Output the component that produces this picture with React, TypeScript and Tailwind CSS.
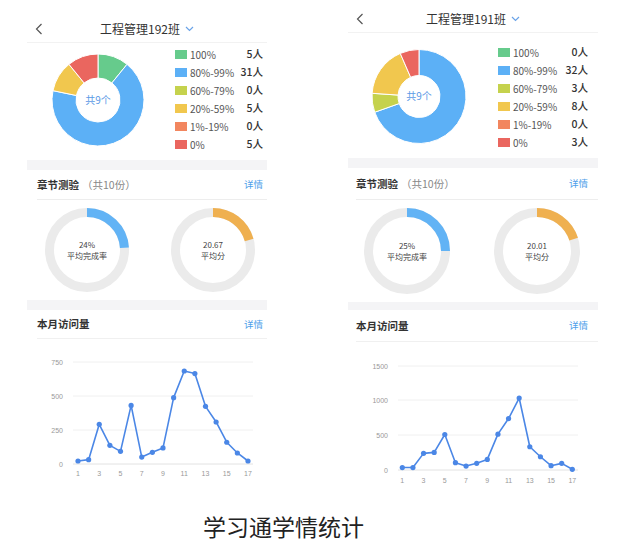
import React from "react";

const FONT = "font-['Noto_Sans_CJK_SC','Noto_Sans',sans-serif]";

const COLORS = {
  green: "#66cb8c",
  blue: "#5cb0f6",
  olive: "#c5d24d",
  yellow: "#f1c74e",
  orange: "#f2865f",
  red: "#ea665f",
};

type Slice = { label: string; value: number; color: string };

type ChartCfg = {
  data: number[];
  max: number;
  labels: string[];
  gridYs: number[];
  zeroY: number;
  topY: number;
  x0: number;
  dx: number;
  gridX1: number;
  gridX2: number;
  labelX: number;
  xLabelY: number;
  height: number;
};

type PanelCfg = {
  title: string;
  wrap: string;
  donutBox: string;
  donutW: number;
  donutH: number;
  donutCx: number;
  donutCy: number;
  rOuter: number;
  rInner: number;
  legend: string;
  slices: Slice[];
  quizHead: string;
  rings: string;
  ringR: number;
  rate: string;
  score: string;
  scorePct: number;
  band2: string;
  visitHead: string;
  chart: ChartCfg;
  width: number;
};

function polar(cx: number, cy: number, r: number, deg: number) {
  const a = ((deg - 90) * Math.PI) / 180;
  return [cx + r * Math.cos(a), cy + r * Math.sin(a)];
}

function sectorPath(cx: number, cy: number, r0: number, r1: number, a0: number, a1: number) {
  const large = a1 - a0 > 180 ? 1 : 0;
  const [x1, y1] = polar(cx, cy, r1, a0);
  const [x2, y2] = polar(cx, cy, r1, a1);
  const [x3, y3] = polar(cx, cy, r0, a1);
  const [x4, y4] = polar(cx, cy, r0, a0);
  return `M${x1} ${y1} A${r1} ${r1} 0 ${large} 1 ${x2} ${y2} L${x3} ${y3} A${r0} ${r0} 0 ${large} 0 ${x4} ${y4} Z`;
}

function Donut({ cfg }: { cfg: PanelCfg }) {
  const total = cfg.slices.reduce((s, x) => s + x.value, 0);
  let acc = 0;
  return (
    <svg width={cfg.donutW} height={cfg.donutH} className="shrink-0">
      {cfg.slices.map((s) => {
        if (s.value === 0) return null;
        const a0 = (acc / total) * 360;
        acc += s.value;
        const a1 = (acc / total) * 360;
        return (
          <path
            key={s.label}
            d={sectorPath(cfg.donutCx, cfg.donutCy, cfg.rInner, cfg.rOuter, a0, a1)}
            fill={s.color}
            stroke="#ffffff"
            strokeWidth={1}
          />
        );
      })}
      <text
        x={cfg.donutCx}
        y={cfg.donutCy + 3.5}
        textAnchor="middle"
        fontSize="10"
        fill="#5b9ae6"
        fontFamily="Noto Sans CJK SC, sans-serif"
      >
        共9个
      </text>
    </svg>
  );
}

function Ring({ r, pct, color, top, bottom }: { r: number; pct: number; color: string; top: string; bottom: string }) {
  const sw = 9;
  const rr = r - sw / 2;
  const c = 2 * Math.PI * rr;
  const size = r * 2;
  return (
    <div className="relative shrink-0" style={{ width: size, height: size }}>
      <svg width={size} height={size}>
        <circle cx={r} cy={r} r={rr} fill="none" stroke="#ebebeb" strokeWidth={sw} />
        <circle
          cx={r}
          cy={r}
          r={rr}
          fill="none"
          stroke={color}
          strokeWidth={sw}
          strokeDasharray={`${c * pct} ${c}`}
          transform={`rotate(-90 ${r} ${r})`}
        />
      </svg>
      <div className="absolute inset-0 flex flex-col items-center justify-center gap-[1px] text-[8px] leading-[10px] text-[#444]">
        <span className="block">{top}</span>
        <span className="block">{bottom}</span>
      </div>
    </div>
  );
}

function LineChart({ cfg, width }: { cfg: ChartCfg; width: number }) {
  const pts = cfg.data.map((v, i) => [
    cfg.x0 + i * cfg.dx,
    cfg.zeroY - (v / cfg.max) * (cfg.zeroY - cfg.topY),
  ]);
  const d = pts.map((p, i) => `${i === 0 ? "M" : "L"}${p[0]} ${p[1]}`).join(" ");
  return (
    <svg width={width} height={cfg.height} fontFamily="Liberation Sans, sans-serif">
      {cfg.gridYs.map((y, i) => (
        <g key={y}>
          <line x1={cfg.gridX1} x2={cfg.gridX2} y1={y} y2={y} stroke={i === cfg.gridYs.length - 1 ? "#e2e2e2" : "#f0f0f0"} strokeWidth={1} />
          <text x={cfg.labelX} y={y + 2.5} textAnchor="end" fontSize="7" fill="#999">
            {cfg.labels[i]}
          </text>
        </g>
      ))}
      {cfg.data.map((_, i) =>
        i % 2 === 0 ? (
          <text key={i} x={cfg.x0 + i * cfg.dx} y={cfg.xLabelY + 2.5} textAnchor="middle" fontSize="7" fill="#999">
            {i + 1}
          </text>
        ) : null
      )}
      <path d={d} fill="none" stroke="#4b87e6" strokeWidth={1.6} strokeLinejoin="round" />
      {pts.map((p, i) => (
        <circle key={i} cx={p[0]} cy={p[1]} r={2.6} fill="#4b87e6" />
      ))}
    </svg>
  );
}

function BackIcon() {
  return (
    <svg width="8" height="12" viewBox="0 0 8 12">
      <polyline points="6.5,1 1.5,6 6.5,11" fill="none" stroke="#555" strokeWidth="1.2" />
    </svg>
  );
}

function DownIcon() {
  return (
    <svg width="9" height="6" viewBox="0 0 9 6">
      <polyline points="1,1 4.5,4.5 8,1" fill="none" stroke="#6aa3e8" strokeWidth="1.2" />
    </svg>
  );
}

function Panel({ cfg }: { cfg: PanelCfg }) {
  return (
    <div className={`${cfg.wrap} flex flex-col`}>
      {/* nav bar */}
      <div className="h-[28px] grid grid-cols-[40px_1fr_40px] items-center border-b border-[#f2f2f2]">
        <div className="pl-[8px] flex items-center">
          <BackIcon />
        </div>
        <div className="flex items-center justify-center gap-[5px]">
          <span className="text-[12px] text-[#333]">{cfg.title}</span>
          <DownIcon />
        </div>
        <div />
      </div>

      {/* distribution */}
      <div className={`${cfg.donutBox} flex items-start`}>
        <Donut cfg={cfg} />
        <div className={`${cfg.legend} flex-1 flex flex-col`}>
          {cfg.slices.map((s) => (
            <div key={s.label} className="h-[18px] flex items-center">
              <span className="w-[12px] h-[9px] shrink-0" style={{ backgroundColor: s.color }} />
              <span className="ml-[3px] text-[10px] text-[#555]">{s.label}</span>
              <span className="ml-auto text-[10.5px] font-medium text-[#333]">{s.value}人</span>
            </div>
          ))}
        </div>
      </div>

      <div className="h-[10px] bg-[#f4f4f6]" />

      {/* chapter quizzes */}
      <div className={`${cfg.quizHead} flex items-center justify-between border-b border-[#ededed]`}>
        <div className="text-[10.5px]">
          <span className="font-semibold text-[#333]">章节测验</span>
          <span className="text-[#888] ml-[3px]">（共10份）</span>
        </div>
        <span className="text-[9.5px] text-[#4d9ee9]">详情</span>
      </div>
      <div className={`${cfg.rings} flex items-center`}>
        <Ring r={cfg.ringR} pct={parseFloat(cfg.rate) / 100} color="#62b3f5" top={cfg.rate} bottom="平均完成率" />
        <Ring r={cfg.ringR} pct={cfg.scorePct} color="#efb050" top={cfg.score} bottom="平均分" />
      </div>

      <div className={`${cfg.band2} bg-[#f4f4f6]`} />

      {/* monthly visits */}
      <div className={`${cfg.visitHead} flex items-center justify-between border-b border-[#f0f0f0]`}>
        <span className="text-[10.5px] font-semibold text-[#333]">本月访问量</span>
        <span className="text-[9.5px] text-[#4d9ee9]">详情</span>
      </div>
      <LineChart cfg={cfg.chart} width={cfg.width} />
    </div>
  );
}

const left: PanelCfg = {
  title: "工程管理192班",
  wrap: "ml-[27px] mt-[15px] w-[240px]",
  width: 240,
  donutBox: "h-[117px]",
  donutW: 142,
  donutH: 117,
  donutCx: 71,
  donutCy: 57,
  rOuter: 46,
  rInner: 22,
  legend: "ml-[6px] pt-[2px] pr-[4px]",
  slices: [
    { label: "100%", value: 5, color: COLORS.green },
    { label: "80%-99%", value: 31, color: COLORS.blue },
    { label: "60%-79%", value: 0, color: COLORS.olive },
    { label: "20%-59%", value: 5, color: COLORS.yellow },
    { label: "1%-19%", value: 0, color: COLORS.orange },
    { label: "0%", value: 5, color: COLORS.red },
  ],
  quizHead: "ml-[10px] h-[30px] pr-[4px]",
  rings: "h-[100px] pl-[18px] gap-[42px]",
  ringR: 42,
  rate: "24%",
  score: "20.67",
  scorePct: 0.2067,
  band2: "h-[10px]",
  visitHead: "ml-[10px] h-[29px] pr-[4px]",
  chart: {
    data: [22, 32, 292, 137, 93, 431, 51, 86, 118, 488, 684, 665, 424, 309, 160, 81, 22],
    max: 750,
    labels: ["750", "500", "250", "0"],
    gridYs: [23, 57, 91, 125],
    zeroY: 125,
    topY: 23,
    x0: 51,
    dx: 10.625,
    gridX1: 46,
    gridX2: 226,
    labelX: 36,
    xLabelY: 134,
    height: 145,
  },
};

const right: PanelCfg = {
  title: "工程管理191班",
  wrap: "ml-[81px] mt-[5px] w-[250px]",
  width: 250,
  donutBox: "h-[125px]",
  donutW: 142,
  donutH: 125,
  donutCx: 71,
  donutCy: 63.5,
  rOuter: 47,
  rInner: 21,
  legend: "ml-[8px] pt-[10px] pr-[10px]",
  slices: [
    { label: "100%", value: 0, color: COLORS.green },
    { label: "80%-99%", value: 32, color: COLORS.blue },
    { label: "60%-79%", value: 3, color: COLORS.olive },
    { label: "20%-59%", value: 8, color: COLORS.yellow },
    { label: "1%-19%", value: 0, color: COLORS.orange },
    { label: "0%", value: 3, color: COLORS.red },
  ],
  quizHead: "ml-[8px] h-[32px] pr-[10px]",
  rings: "h-[102px] pl-[16px] gap-[44px]",
  ringR: 43,
  rate: "25%",
  score: "20.01",
  scorePct: 0.2001,
  band2: "h-[8px]",
  visitHead: "ml-[8px] h-[32px] pr-[10px]",
  chart: {
    data: [35, 35, 240, 254, 512, 105, 57, 96, 153, 517, 742, 1038, 335, 191, 62, 96, 10],
    max: 1500,
    labels: ["1500", "1000", "500", "0"],
    gridYs: [24, 58, 93, 128],
    zeroY: 128,
    topY: 24,
    x0: 54.3,
    dx: 10.625,
    gridX1: 50,
    gridX2: 230,
    labelX: 40,
    xLabelY: 138,
    height: 148,
  },
};

export default function App() {
  return (
    <div className={`${FONT} w-[640px] h-[545px] bg-white overflow-hidden`}>
      <div className="h-[500px] flex items-start">
        <Panel cfg={left} />
        <Panel cfg={right} />
      </div>
      <div className="pt-[12px] pl-[203px] text-[23px] leading-[28px] text-[#222]">学习通学情统计</div>
    </div>
  );
}
